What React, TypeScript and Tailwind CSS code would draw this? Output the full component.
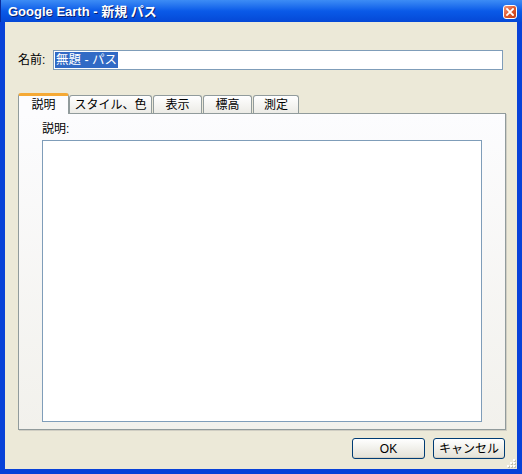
import React from "react";

const tabs = [
  { label: "説明", w: "w-[51px]", active: true },
  { label: "スタイル、色", w: "w-[83px]" },
  { label: "表示", w: "w-[49px]" },
  { label: "標高", w: "w-[49px]" },
  { label: "測定", w: "w-[46px]" },
];

const font = "font-['MS_UI_Gothic','Liberation_Sans','Noto_Sans_CJK_JP',sans-serif]";

export default function App() {
  return (
    <div className={`w-[522px] h-[474px] flex flex-col overflow-hidden text-[12px] text-black ${font}`}>
      {/* title bar */}
      <div className="h-[22px] shrink-0 flex items-center justify-between pl-[7px] pr-[5px] bg-gradient-to-b from-[#3d8cf5] via-[#0a5ae8] to-[#0548d6] border-l border-[#0a2a9c]">
        <span className="text-white font-bold text-[13px] leading-none [text-shadow:1px_1px_#0a1e6e]">
          Google Earth - 新規 パス
        </span>
        <div className="w-[14px] h-[14px] rounded-[3px] border border-white bg-gradient-to-br from-[#f0957a] via-[#e05a2e] to-[#c13d14] flex items-center justify-center mt-[1px]">
          <svg width="8" height="8" viewBox="0 0 8 8">
            <path d="M1 1 L7 7 M7 1 L1 7" stroke="white" strokeWidth="1.8" strokeLinecap="square" />
          </svg>
        </div>
      </div>

      {/* body */}
      <div className="flex-1 flex flex-col bg-[#ece9d8] border-l-[5px] border-r-[5px] border-b-[6px] border-[#0842d8] pl-[13px] pr-[11px]">
        {/* name row */}
        <div className="flex items-center mt-[28px]">
          <span className="w-[35px]">名前:</span>
          <div className="w-[450px] h-[20px] bg-white border border-[#7f9db9] flex items-center pl-[1px]">
            <span className="bg-[#316ac5] text-white px-[1px] leading-[16px] text-[12.5px]">無題 - パス</span>
          </div>
        </div>

        {/* tabs */}
        <div className="flex items-end gap-[1px] h-[21px] mt-[22px] relative z-10">
          {tabs.map((t) =>
            t.active ? (
              <div
                key={t.label}
                className={`${t.w} h-[21px] -mb-px -mr-[1px] bg-[#fcfcfe] border border-b-0 border-[#919b9c] border-t-[3px] border-t-[#f5a935] rounded-t-[3px] flex items-center justify-center pb-[1px]`}
              >
                {t.label}
              </div>
            ) : (
              <div
                key={t.label}
                className={`${t.w} h-[18px] bg-gradient-to-b from-white to-[#ecebe6] border border-b-0 border-[#919b9c] rounded-t-[3px] flex items-center justify-center`}
              >
                {t.label}
              </div>
            )
          )}
        </div>

        {/* panel */}
        <div className="w-[488px] h-[317px] border border-[#919b9c] bg-gradient-to-b from-[#fcfcfe] to-[#f2f1ec] shadow-[1px_1px_0_#d0cec3] pl-[23px] pt-[8px]">
          <div className="leading-[14px]">説明:</div>
          <div className="w-[440px] h-[282px] mt-[4px] bg-white border border-[#7f9db9]" />
        </div>

        {/* buttons */}
        <div className="flex justify-end gap-[8px] mt-[8px] pr-[1px]">
          <button className="w-[73px] h-[21px] rounded-[3px] border border-[#003c74] bg-gradient-to-b from-white to-[#e3e1d6] shadow-[inset_0_-1px_#d6d0c5]">
            OK
          </button>
          <button className="w-[72px] h-[21px] rounded-[3px] border border-[#003c74] bg-gradient-to-b from-white to-[#e3e1d6] shadow-[inset_0_-1px_#d6d0c5]">
            キャンセル
          </button>
        </div>

        {/* size grip */}
        <div className="flex justify-end mt-auto -mr-[10px]">
          <svg width="10" height="10" viewBox="0 0 10 10">
            {[
              [8, 0],
              [8, 3],
              [5, 3],
              [8, 6],
              [5, 6],
              [2, 6],
            ].map(([x, y]) => (
              <g key={`${x}-${y}`}>
                <rect x={x} y={y + 1} width="2" height="2" fill="#c5c2b2" />
                <rect x={x - 1} y={y} width="2" height="2" fill="#ffffff" />
              </g>
            ))}
          </svg>
        </div>
      </div>
    </div>
  );
}
